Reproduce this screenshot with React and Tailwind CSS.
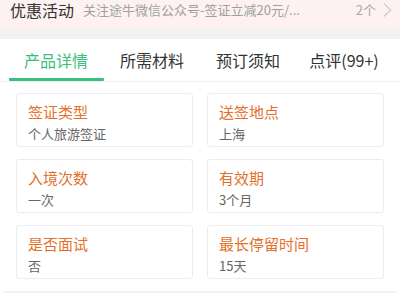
const items = [
  { label: '签证类型', value: '个人旅游签证' },
  { label: '送签地点', value: '上海' },
  { label: '入境次数', value: '一次' },
  { label: '有效期', value: '3个月' },
  { label: '是否面试', value: '否' },
  { label: '最长停留时间', value: '15天' },
]

const tabs = ['产品详情', '所需材料', '预订须知', '点评(99+)']

export default function App() {
  return (
    <div
      className="w-[400px] h-[300px] overflow-hidden bg-white"
      style={{ fontFamily: '"Noto Sans CJK SC", "Noto Sans", sans-serif' }}
    >
      {/* Promo bar */}
      <div className="h-[29px] bg-[#fdf2f1] flex items-start pl-[10px] pr-[8px]">
        <div className="h-[20px] flex items-center w-full">
          <span className="text-[16px] leading-[20px] text-[#333] whitespace-nowrap">优惠活动</span>
          <span className="ml-[9px] text-[13px] leading-[20px] text-[#a0a0a0] whitespace-nowrap">
            关注途牛微信公众号-签证立减20元/...
          </span>
          <span className="ml-auto text-[13px] leading-[20px] text-[#aaa] whitespace-nowrap">2个</span>
          <svg className="ml-[6px] w-[10px] h-[16px]" viewBox="0 0 10 16" fill="none">
            <path d="M2 1.5 L8.5 8 L2 14.5" stroke="#ccc" strokeWidth="1.2" />
          </svg>
        </div>
      </div>
      <div className="h-[10px] bg-[#f2f2f2]" />

      {/* Tabs */}
      <div className="h-[43px] flex px-[8px] border-b border-[#f0f0f0]">
        {tabs.map((t, i) => (
          <div key={t} className="flex-1 relative flex items-center justify-center">
            <span
              className={
                i === 0
                  ? 'text-[16px] text-[#3bbf7a] -mt-[1px]'
                  : 'text-[16px] text-[#333] -mt-[1px]'
              }
            >
              {t}
            </span>
            {i === 0 && (
              <div className="absolute left-[1px] right-0 bottom-0 h-[3px] bg-[#3bbf7a] rounded-[1px]" />
            )}
          </div>
        ))}
      </div>

      {/* Cards */}
      <div className="grid grid-cols-2 gap-x-[14px] gap-y-[12px] px-[16px] pt-[11px]">
        {items.map((it) => (
          <div
            key={it.label}
            className="h-[54px] border border-[#ececec] rounded-[3px] pl-[11px] pt-[8px]"
          >
            <div className="text-[15px] leading-[20px] text-[#e4702c]">{it.label}</div>
            <div className="text-[13px] leading-[20px] text-[#666] mt-[2px]">{it.value}</div>
          </div>
        ))}
      </div>
      <div className="mx-[4px] mt-[12px] h-[2px] bg-[#f2f2f2]" />
    </div>
  )
}
